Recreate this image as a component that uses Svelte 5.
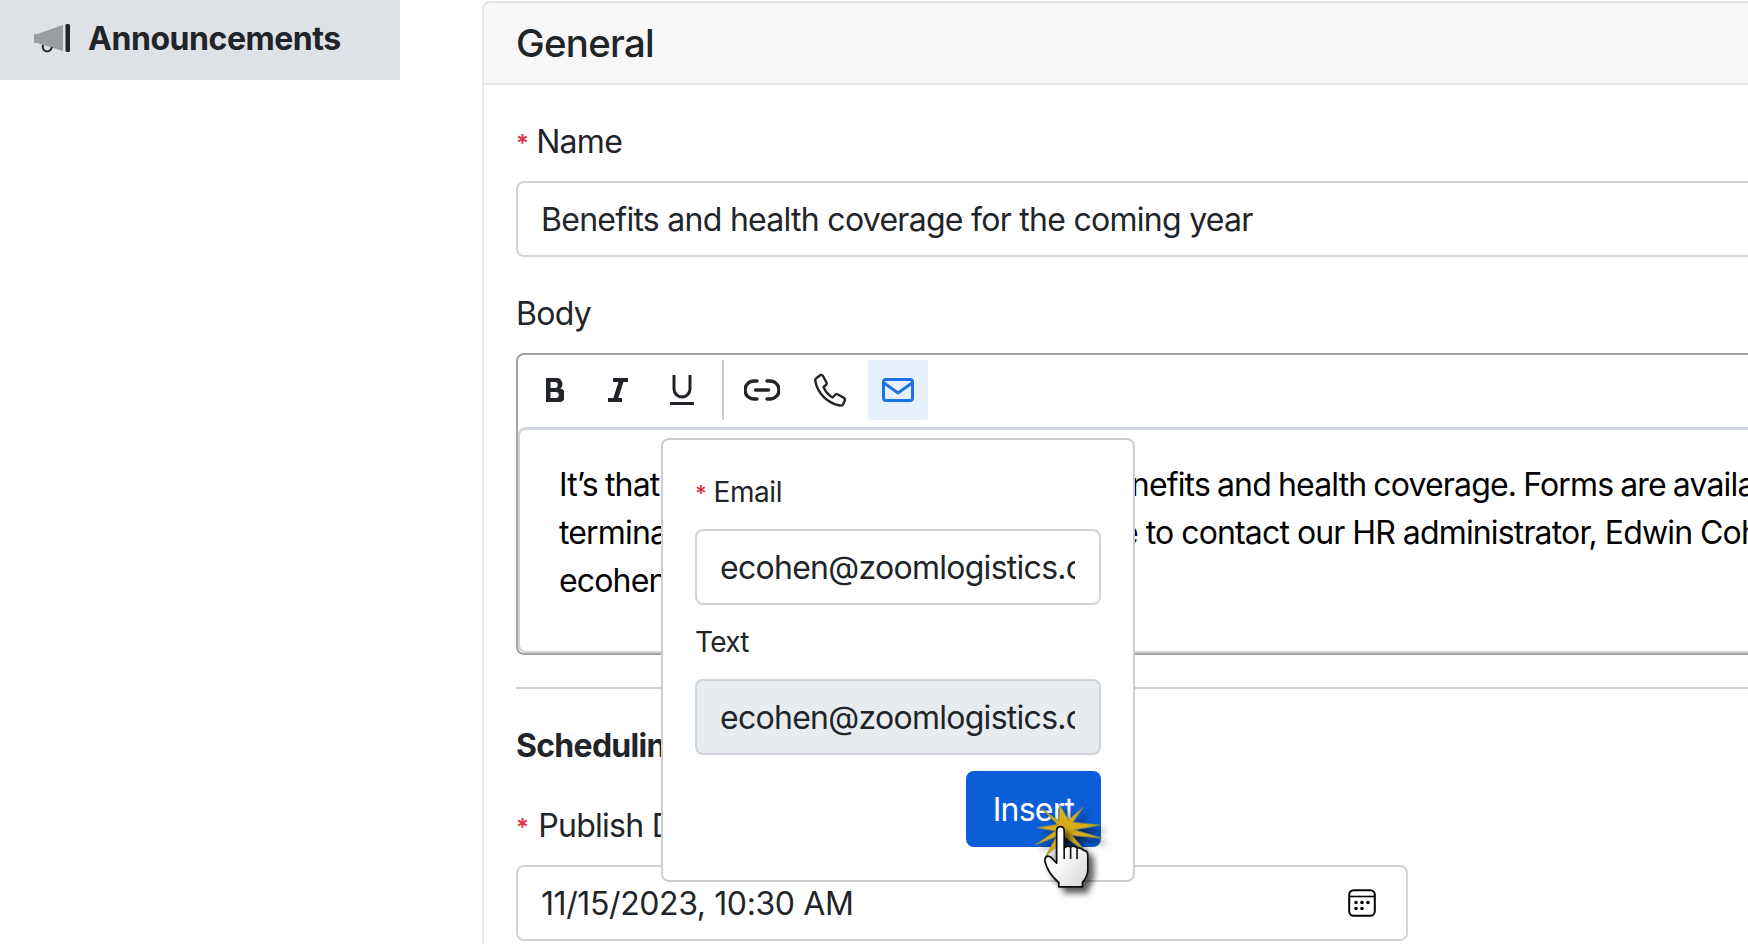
<script>
  const lines = [
    "It’s that time of the year to check your benefits and health coverage. Forms are available at the front desk and the",
    "terminal in the mailroom. Please feel free to contact our HR administrator, Edwin Cohen, by email at",
    "ecohen@zoomlogistics.com."
  ];
</script>

<div class="page">
  <aside class="side">
    <div class="nav-item">
      <svg class="mega" viewBox="0 0 36 30" width="36" height="30">
        <path d="M0 10 H3 L29 1 V27 L3 19 H0 Z" fill="#9a9ea3"/>
        <path d="M9 21 c-2 7 7 9 9 2" fill="none" stroke="#212529" stroke-width="2"/>
        <rect x="31.500" y="0" width="4.500" height="28" rx="1.500" fill="#212529"/>
      </svg>
      <span>Announcements</span>
    </div>
  </aside>

  <main class="card">
    <header class="card-head">General</header>
    <div class="card-body">
      <label class="lbl name-lbl"><span class="req">*</span>Name</label>
      <div class="input">Benefits and health coverage for the coming year</div>

      <label class="lbl body-lbl">Body</label>
      <div class="editor">
        <div class="toolbar">
          <button class="tb"><svg viewBox="0 0 18 24" width="18" height="24"><path d="M0 0h9.500a6 6 0 0 1 4.800 10.500A6.500 6.500 0 0 1 11 24H0z M4.500 4v6h4.300a3 3 0 0 0 0-6z M4.500 14v6h5.300a3 3 0 0 0 0-6z" fill="#212529" fill-rule="evenodd"/></svg></button>
          <button class="tb"><svg viewBox="0 0 20 24" width="20" height="24"><path d="M5 0h15v4h-4.500l-5.200 16H14v4H0v-4h5.300L10.500 4H5z" fill="#212529"/></svg></button>
          <button class="tb"><svg viewBox="0 0 24 30" width="24" height="30"><path d="M4 0v14a8 8 0 0 0 16 0V0" fill="none" stroke="#212529" stroke-width="3"/><rect x="0" y="27" width="24" height="3" fill="#212529"/></svg></button>
          <div class="sep"></div>
          <button class="tb link"><svg viewBox="0 0 36 22" width="36" height="22"><path d="M13 2h-3a9 9 0 0 0 0 18h3M23 2h3a9 9 0 0 1 0 18h-3M11.500 11h13" fill="none" stroke="#212529" stroke-width="3.400" stroke-linecap="round"/></svg></button>
          <button class="tb phone"><svg viewBox="0 0 34 34" width="34" height="34"><path d="M3 5.500 L7.500 2 Q9 1.500 10 3 L13.500 9.500 Q14 11 13 12 L10.500 14 Q13.500 21 19.500 24.500 L22.500 21.500 Q23.500 20.700 25 21.500 L31 25 Q32.300 26 31.800 27.500 L30 31.500 Q29 33 27 32.500 C14 30 4.500 20 2.300 8 Q2 6.500 3 5.500Z" fill="none" stroke="#212529" stroke-width="2.400" stroke-linejoin="round"/></svg></button>
          <button class="tb mail"><svg viewBox="0 0 32 24" width="32" height="24"><rect x="1.500" y="1.500" width="29" height="21" rx="2.500" fill="none" stroke="#1a73e8" stroke-width="3"/><path d="M2 5 L16 15 L30 5" fill="none" stroke="#1a73e8" stroke-width="2.800"/></svg></button>
        </div>
        <div class="content">
          {#each lines as line}<p>{line}</p>{/each}
        </div>
      </div>

      <hr class="rule" />
      <h3 class="sched">Scheduling</h3>
      <label class="lbl pub-lbl"><span class="req pub">*</span>Publish Date</label>
      <div class="input date">
        <span>11/15/2023, 10:30 AM</span>
        <svg viewBox="0 0 28 28" width="28" height="28"><rect x="1.200" y="1.200" width="25.600" height="25.600" rx="4.500" fill="none" stroke="#000" stroke-width="2"/><path d="M1 7.500H27" stroke="#000" stroke-width="1.600"/><g fill="#000"><circle cx="8" cy="13.500" r="1.800"/><circle cx="14" cy="13.500" r="1.800"/><circle cx="20" cy="13.500" r="1.800"/><circle cx="8" cy="19.500" r="1.800"/><circle cx="14" cy="19.500" r="1.800"/></g></svg>
      </div>
    </div>

    <div class="popover">
      <label class="pop-lbl email-lbl"><span class="req small">*</span>Email</label>
      <div class="pop-input first"><span>ecohen@zoomlogistics.com</span></div>
      <label class="pop-lbl text-lbl">Text</label>
      <div class="pop-input disabled"><span>ecohen@zoomlogistics.com</span></div>
      <div class="actions"><button class="insert">Insert</button></div>
    </div>
  </main>

  <svg class="cursor" viewBox="0 0 80 90" width="86" height="97">
    <defs>
      <filter id="sh" x="-30%" y="-30%" width="170%" height="170%"><feDropShadow dx="5" dy="5" stdDeviation="3" flood-color="#000" flood-opacity="0.65"/></filter>
      <linearGradient id="hand" x1="0" y1="0" x2="1" y2="1"><stop offset="0.400" stop-color="#fff"/><stop offset="1" stop-color="#d4d4d4"/></linearGradient>
    </defs>
    <path filter="url(#sh)" d="M6.500 2 L24 15 L25 0 L33 14 L46.500 2 L37 16 L62 18.600 L38 23 L64 30.700 L36 28 L48 42 L30 30 L11 49 L22 29 L2 37 L21 24 L4 21 L23 18 Z" fill="#d9ad14" stroke="#8f8a4a" stroke-width="0.800"/>
    <path filter="url(#sh)" d="M22 24 Q22 20 25.500 20 Q29 20 29 24 V40 Q32 37 35 39 Q38 37 41 40 Q44 39 47 42 Q51 42 51 47 V60 Q51 66 46 72 V76 H24 V72 Q14 64 11 52 Q11 46 16 48 L22 54 Z" fill="url(#hand)" stroke="#111" stroke-width="1.600" stroke-linejoin="round"/>
    <path d="M29 40V50M35 39V50M41 40V50" stroke="#111" stroke-width="1.500" fill="none"/>
  </svg>
</div>

<style>
  :global(body) { margin: 0; background: #fff; }
  .page {
    width: 1748px; height: 944px; overflow: hidden; position: relative;
    display: flex; align-items: flex-start;
    font-family: Inter, "Liberation Sans", sans-serif; color: #212529; letter-spacing: -0.72px;
  }
  .side { width: 400px; flex: none; }
  .nav-item {
    height: 80px; background: #dee2e6; display: flex; align-items: center;
    padding: 0 0 4px 34px; gap: 18px; box-sizing: border-box;
    font-weight: 700; font-size: 32px; letter-spacing: -0.45px;
  }
  .mega { margin-top: 2px; }
  .card {
    position: relative; flex: none; width: 1400px; height: 1100px; margin: 1px 0 0 82px;
    border: 2px solid #e4e6e9; border-radius: 8px 0 0 0; background: #fff; box-sizing: border-box;
  }
  .card-head {
    height: 82px; box-sizing: border-box; background: #f7f7f7; border-bottom: 2px solid #e4e6e9;
    font-size: 38.400px; font-weight: 500; padding: 18px 0 0 32px; line-height: 44px; border-radius: 6px 0 0 0;
  }
  .card-body { padding: 0 0 0 32px; }
  .lbl { display: block; font-size: 32px; line-height: 48px; }
  .name-lbl { margin-top: 33px; }
  .req { color: #dc3545; font-size: 24px; font-weight: 600; margin-right: 8px; position: relative; top: -1px; }
  .req.pub { margin-right: 10px; }
  .req.small { font-size: 22px; margin: 0 7px 0 0; }
  .input {
    height: 76px; box-sizing: border-box; border: 2px solid #ced4da; border-radius: 8px;
    padding: 0 23px; display: flex; align-items: center; font-size: 32px; background: #fff; margin-top: 12px;
  }
  .body-lbl { margin-top: 33px; }
  .editor {
    margin-top: 15px; height: 302px; box-sizing: border-box;
    border: 2px solid #a3a3a3; border-radius: 8px 0 0 8px; border-right: 0; padding: 0;
  }
  .toolbar { height: 72px; padding: 5px 0 0 5px; box-sizing: border-box; display: flex; align-items: flex-start; }
  .tb { border: 0; background: transparent; padding: 0; height: 60px; width: 63.500px; display: flex; align-items: center; justify-content: center; border-radius: 3px; flex: none; }
  .sep { width: 2px; height: 60px; background: #ccc; margin-left: 8px; flex: none; }
  .link { width: 68px; margin-left: 4px; }
  .phone { width: 68px; }
  .mail { width: 60px; background: #e8f0fe; margin-left: 4px; }
  .content {
    height: 226px; box-sizing: border-box; padding: 31px 0 0 39px; font-size: 32px; line-height: 48px; color: #000; white-space: nowrap;
    border: solid #ced4da; border-width: 3px 0 2px 2px; border-radius: 8px 0 0 8px; letter-spacing: -0.85px;
  }
  .content p { margin: 0; }
  .content p:nth-child(1) { word-spacing: -1.100px; }
  .content p:nth-child(2) { word-spacing: -0.300px; }
  .rule { margin: 32px 0 0; border: 0; border-top: 2px solid #ccc; }
  .sched { margin: 0; font-size: 32px; font-weight: 700; line-height: 40px; margin-top: 37px; }
  .pub-lbl { margin-top: 36px; width: 890px; }
  .date { width: 892px; margin-top: 12px; justify-content: space-between; padding-right: 30px; letter-spacing: -0.4px; }
  .popover {
    position: absolute; left: 177px; top: 435px; width: 474px; height: 444px; box-sizing: border-box;
    background: #fff; border: 2px solid #ccced1; border-radius: 8px; padding: 31px 32px 0;
  }
  .pop-lbl { display: block; font-size: 28px; line-height: 42px; letter-spacing: -0.4px; }
  .text-lbl { letter-spacing: -0.7px; }
  .pop-input {
    margin-top: 16px; height: 76px; box-sizing: border-box; border: 2px solid #ced4da; border-radius: 8px;
    padding: 0 24px 0 23px; display: flex; align-items: center; font-size: 32px; background: #fff; 
  }
  .pop-input.first { margin-top: 14px; }
  .pop-input span { display: block; overflow: hidden; white-space: nowrap; width: 100%; }
  .disabled { background: #e9ecef; }
  .text-lbl { margin-top: 16px; }
  .actions { display: flex; justify-content: flex-end; margin-top: 16px; }
  .insert {
    width: 135px; height: 76px; border: 0; border-radius: 8px; background: #0b5ed7; color: #fff;
    font: 400 32px Inter, "Liberation Sans", sans-serif; letter-spacing: -0.72px; padding: 0;
  }
  .cursor { position: absolute; left: 1033px; top: 805px; }
</style>
